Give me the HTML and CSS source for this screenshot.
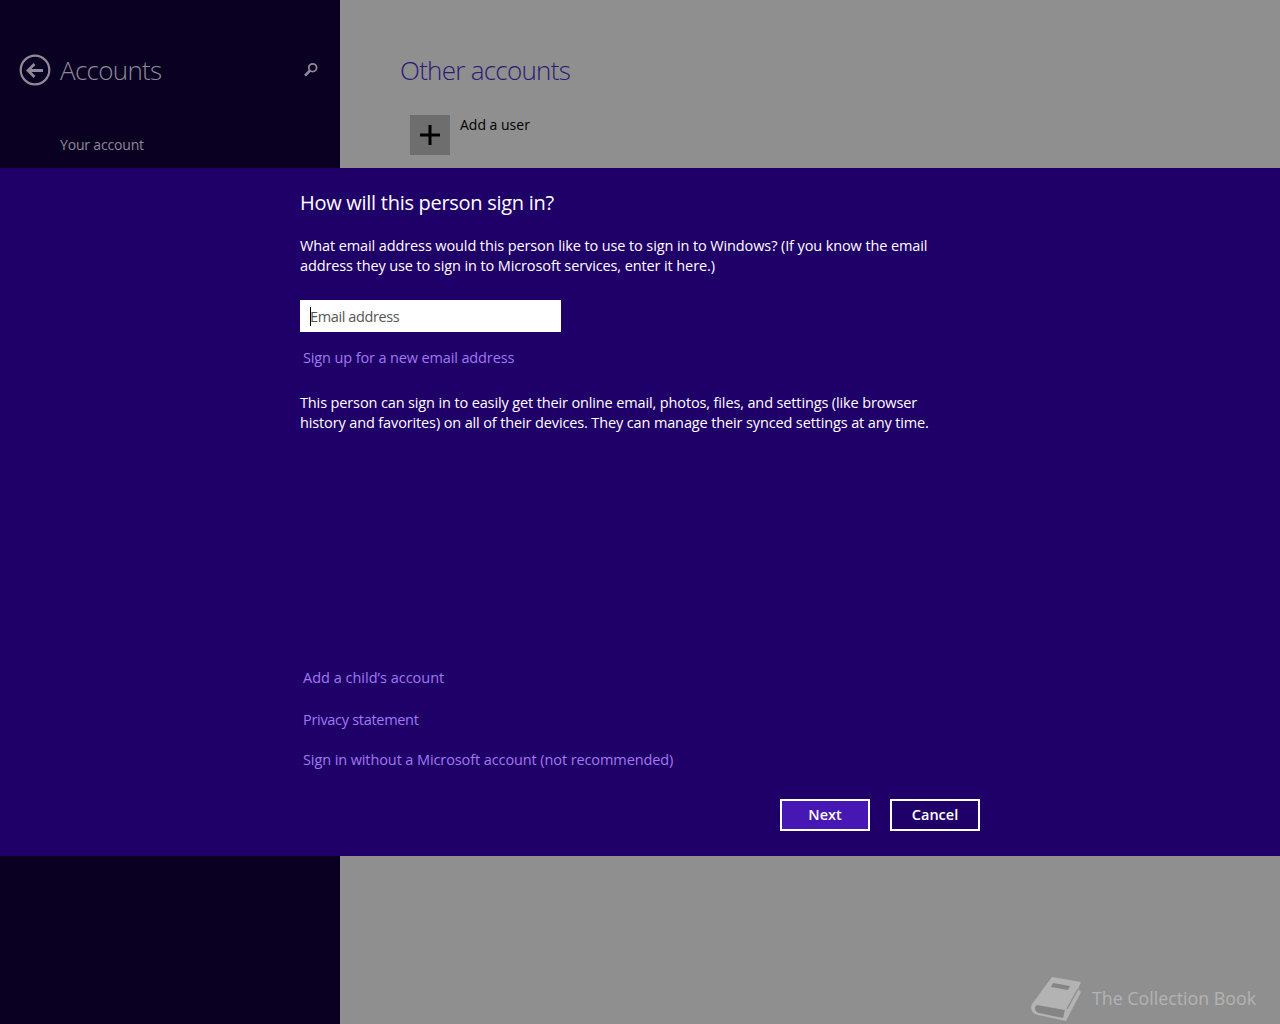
FILE: index.html
```html
<!DOCTYPE html>
<html lang="en">
<head>
<meta charset="utf-8">
<title>Accounts</title>
<link rel="stylesheet" href="styles.css">
</head>
<body>
<div class="app">
  <aside class="side">
    <div class="side-head">
      <svg class="back" width="32" height="32" viewBox="0 0 32 32"><circle cx="16" cy="16" r="14.3" fill="none" stroke="#8e8a99" stroke-width="2.2"/><path d="M9 16.5H24M15.5 10 9 16.5 15.5 23" fill="none" stroke="#8e8a99" stroke-width="2.8"/></svg>
      <h1 class="side-title">Accounts</h1>
      <svg class="search" width="16" height="16" viewBox="0 0 16 16"><circle cx="9.7" cy="5.7" r="3.9" fill="none" stroke="#8e8a99" stroke-width="1.8"/><path d="M7 8.5 2 13.7" stroke="#8e8a99" stroke-width="2.6"/></svg>
    </div>
    <div class="side-item">Your account</div>
  </aside>
  <main class="content">
    <h2 class="content-title">Other accounts</h2>
    <div class="add-user">
      <div class="add-tile"><svg width="20" height="20" viewBox="0 0 20 20"><path d="M10 0V20M0 10H20" stroke="#000" stroke-width="3"/></svg></div>
      <div class="add-label">Add a user</div>
    </div>
    <div class="brand">
      <svg class="brand-icon" width="60" height="52" viewBox="0 0 60 52"><path d="M26 5 55 10 52 17 55 20 40 49 12 43C5 41 4 36 6 32Z" fill="#b3b3b3"/><path d="M11 33 39 38 37 46 13 41C8 39 8 35 11 33Z" fill="#858585"/><path d="M27 11 44 14 42 18 25 15Z" fill="#858585"/><path d="M52 17 41 37" stroke="#8f8f8f" stroke-width="1.4"/></svg>
      <span class="brand-text">The Collection Book</span>
    </div>
  </main>
</div>
<section class="dialog">
  <div class="dialog-inner">
    <h2 class="dialog-title">How will this person sign in?</h2>
    <p class="para para-first">What email address would this person like to use to sign in to Windows? (If you know the email address they use to sign in to Microsoft services, enter it here.)</p>
    <div class="field"><span class="caret"></span><span class="placeholder">Email address</span></div>
    <a class="link link-signup">Sign up for a new email address</a>
    <p class="para para-second">This person can sign in to easily get their online email, photos, files, and settings (like browser history and favorites) on all of their devices. They can manage their synced settings at any time.</p>
    <div class="links">
      <a class="link link-child">Add a child’s account</a>
      <a class="link link-privacy">Privacy statement</a>
      <a class="link link-local">Sign in without a Microsoft account (not recommended)</a>
    </div>
    <div class="actions">
      <button class="btn btn-primary">Next</button>
      <button class="btn">Cancel</button>
    </div>
  </div>
</section>
</body>
</html>
```
FILE: styles.css
```css
* { box-sizing: border-box; }
html, body { margin: 0; height: 100%; }
body { font-family: "Open Sans", "Noto Sans", sans-serif; overflow: hidden; background: #8f8f8f; }
.app { display: grid; grid-template-columns: 340px 1fr; height: 1024px; }
.side { background: #0a0021; padding: 54px 0 0 19px; color: #8e8a99; }
.side-head { display: flex; align-items: center; height: 32px; }
.back { flex: none; }
.side-title { margin: 0 0 0 9px; font-size: 26px; font-weight: 300; width: 243px; letter-spacing: -.7px; line-height: 32px; }
.search { flex: none; }
.side-item { margin: 49px 0 0 41px; font-size: 14px; line-height: 20px; letter-spacing: -.17px; }
.content { position: relative; padding: 52px 0 0 60px; }
.content-title { margin: 0; font-size: 26px; font-weight: 300; line-height: 36px; color: #2a1a73; letter-spacing: -.73px; }
.add-user { display: flex; margin: 27px 0 0 10px; }
.add-tile { width: 40px; height: 40px; background: #6e6e6e; display: flex; align-items: center; justify-content: center; }
.add-label { margin: 0 0 0 10px; font-size: 14px; line-height: 20px; color: #000; }
.brand { position: absolute; right: 24px; bottom: 0; display: flex; align-items: center; gap: 6px; }
.brand-text { font-size: 17.8px; color: #b3b3b3; }
.dialog { position: absolute; left: 0; top: 168px; width: 1280px; height: 688px; background: #1f0068; color: #fff; }
.dialog-inner { width: 680px; margin-left: 300px; height: 100%; display: flex; flex-direction: column; }
.dialog-title { margin: 21px 0 0; font-size: 20px; font-weight: 400; line-height: 28px; letter-spacing: -.28px; }
.para { margin: 0; font-size: 14.5px; line-height: 20px; width: 640px; letter-spacing: -.11px; }
.para-first { margin-top: 19px; }
.field { position: relative; margin-top: 24px; width: 261px; height: 32px; background: #fff; padding: 1px 0 0 10px; font-size: 14.5px; line-height: 32px; color: #555; letter-spacing: -.38px; }
.caret { position: absolute; left: 10px; top: 7px; width: 1px; height: 19px; background: #000; }
.link { display: block; margin-left: 3px; font-size: 14.5px; line-height: 20px; color: #a179f0; }
.link-signup { margin-top: 16px; letter-spacing: -.13px; }
.para-second { margin-top: 25px; letter-spacing: -.13px; }
.links { margin-top: 235px; display: flex; flex-direction: column; gap: 20px; }
.link-child { margin-bottom: 2px; }
.link-privacy { letter-spacing: -.3px; }
.link-local { letter-spacing: -.1px; }
.actions { margin-top: 29px; display: flex; justify-content: flex-end; gap: 20px; }
.btn { width: 90px; height: 32px; padding: 0 0 1px; background: #1f0068; border: 2px solid #fff; color: #fff; font: 600 14.5px "Open Sans", "Noto Sans", sans-serif; }
.btn-primary { background: #4617b4; }
```
